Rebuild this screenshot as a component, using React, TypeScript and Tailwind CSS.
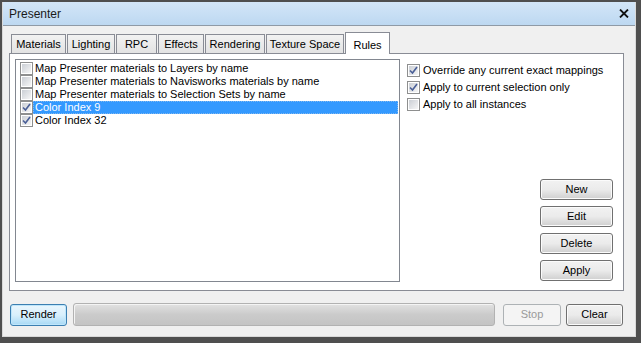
import React from 'react';

const FONT = { fontFamily: '"Liberation Sans", Arial, sans-serif' };

const tabs = [
  { label: 'Materials', w: 'w-[55px]' },
  { label: 'Lighting', w: 'w-[48px]' },
  { label: 'RPC', w: 'w-[41px]' },
  { label: 'Effects', w: 'w-[46px]' },
  { label: 'Rendering', w: 'w-[60px]' },
  { label: 'Texture Space', w: 'w-[78px]' },
];

const rules = [
  { label: 'Map Presenter materials to Layers by name', checked: false },
  { label: 'Map Presenter materials to Navisworks materials by name', checked: false },
  { label: 'Map Presenter materials to Selection Sets by name', checked: false },
  { label: 'Color Index 9', checked: true, selected: true },
  { label: 'Color Index 32', checked: true },
];

const options = [
  { label: 'Override any current exact mappings', checked: true },
  { label: 'Apply to current selection only', checked: true },
  { label: 'Apply to all instances', checked: false },
];

function CheckBox({ checked }: { checked: boolean }) {
  return (
    <div className="w-[13px] h-[13px] flex-shrink-0 border border-[#8e8f8f] bg-white p-px">
      <div className="w-full h-full bg-gradient-to-br from-[#cbcfd5] to-[#f6f6f6] flex items-center justify-center">
        {checked && (
          <svg width="9" height="9" viewBox="0 0 9 9">
            <path d="M1 4.5 L3.5 7 L8 1" fill="none" stroke="#4a5f97" strokeWidth={1.6} />
          </svg>
        )}
      </div>
    </div>
  );
}

function Button({ label, className = '', disabled = false }: { label: string; className?: string; disabled?: boolean }) {
  return (
    <div
      className={`h-[21px] rounded-[3px] border flex items-center justify-center text-[11px] ${
        disabled
          ? 'border-[#adb2b5] bg-[#f4f4f4] text-[#9a9a9a]'
          : 'border-[#707070] bg-gradient-to-b from-[#f2f2f2] via-[#ebebeb] to-[#cfcfcf] text-black shadow-[inset_0_0_0_1px_#fbfbfb]'
      } ${className}`}
    >
      {label}
    </div>
  );
}

export default function App() {
  return (
    <div className="w-[641px] h-[343px] bg-[#4f4f4f] pl-[2px] pt-[2px] pr-[5px] pb-[6px]" style={FONT}>
      <div className="h-full flex flex-col border border-[#d9d9d9] border-t-0">
        {/* Title bar */}
        <div className="h-[24px] flex-shrink-0 bg-gradient-to-b from-[#d3e6f8] to-[#bdd8f1] flex items-center justify-between pl-[6px] pr-[6px] border-b border-[#8f9aa6]">
          <span className="text-[12px] text-[#1a1a1a] pt-px">Presenter</span>
          <svg width="10" height="9" viewBox="0 0 10 9">
            <path d="M1 0.5 L9 8.5 M9 0.5 L1 8.5" stroke="#111" strokeWidth={1.8} />
          </svg>
        </div>

        {/* Body */}
        <div className="flex-1 bg-[#f0f0f0] pl-[6px] pt-[6px] flex flex-col">
          {/* Tabs */}
          <div className="h-[21px] flex items-end pl-[2px] gap-px relative z-10">
            {tabs.map((t) => (
              <div
                key={t.label}
                className={`${t.w} h-[19px] border border-b-0 border-[#898c95] bg-gradient-to-b from-[#f2f2f2] to-[#e3e3e3] text-[11px] text-black flex items-center justify-center pt-px`}
              >
                {t.label}
              </div>
            ))}
            <div className="w-[45px] h-[22px] -mb-px border border-b-0 border-[#898c95] bg-white text-[11px] text-black flex items-start justify-center pt-[4px]">
              Rules
            </div>
          </div>

          {/* Tab panel */}
          <div className="w-[615px] h-[238px] border border-[#898c95] bg-white flex pl-[5px] pt-[5px]">
            {/* Rule list */}
            <div className="w-[385px] h-[223px] border border-[#828790] pt-[2px] pl-[4px] pr-px">
              {rules.map((r) => (
                <div key={r.label} className="h-[13px] flex items-center">
                  <CheckBox checked={r.checked} />
                  <span
                    className={`flex-1 h-[13px] pl-[2px] text-[11px] leading-[13px] ${
                      r.selected ? 'bg-[#3399ff] text-white outline outline-1 outline-dotted outline-[#7fb7f0] -outline-offset-1' : 'text-black'
                    }`}
                  >
                    {r.label}
                  </span>
                </div>
              ))}
            </div>

            {/* Options */}
            <div className="flex-1 flex flex-col justify-between pl-[7px] pt-[5px] pr-[10px] h-[223px]">
              <div className="flex flex-col gap-[4px]">
                {options.map((o) => (
                  <div key={o.label} className="h-[13px] flex items-center gap-[3px]">
                    <CheckBox checked={o.checked} />
                    <span className="text-[11px] text-black leading-[13px]">{o.label}</span>
                  </div>
                ))}
              </div>
              <div className="flex flex-col items-end gap-[6px] pb-px">
                <Button label="New" className="w-[73px]" />
                <Button label="Edit" className="w-[73px]" />
                <Button label="Delete" className="w-[73px]" />
                <Button label="Apply" className="w-[73px]" />
              </div>
            </div>
          </div>

          {/* Bottom row */}
          <div className="flex items-center mt-[12px] pl-px">
            <div className="w-[57px] h-[22px] rounded-[3px] border border-[#3c7fb1] bg-gradient-to-b from-[#eaf6fd] via-[#d9f0fc] to-[#a7d9f5] shadow-[inset_0_0_0_1px_#bfe6fb] flex items-center justify-center text-[11px] text-black">
              Render
            </div>
            <div className="ml-[6px] w-[422px] h-[23px] rounded-[3px] border border-[#b2b2b2] bg-gradient-to-b from-[#e2e2e2] via-[#cbcbcb] to-[#c4c4c4] shadow-[inset_1px_1px_0_#f4f4f4]" />
            <Button label="Stop" disabled className="ml-[8px] w-[58px] h-[22px]" />
            <Button label="Clear" className="ml-[5px] w-[57px] h-[22px]" />
          </div>
        </div>
      </div>
    </div>
  );
}
